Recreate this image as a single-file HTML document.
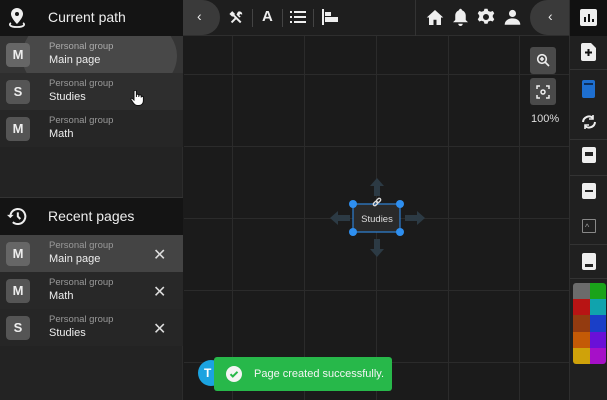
<!DOCTYPE html>
<html><head><style>
*{margin:0;padding:0;box-sizing:border-box}
body{width:607px;height:400px;overflow:hidden;background:#1b1b1b;font-family:"Liberation Sans",sans-serif;position:relative;color:#eee}
.abs{position:absolute}
.left{left:0;top:0;width:183px;height:400px;background:#232323;border-right:1px solid #2c2c2c}
.hdr{position:absolute;left:0;width:183px;height:36px;background:#141414;font-size:14px;color:#eee}
.hdr span{position:absolute;left:48px;top:9px}
.row{position:absolute;left:0;width:183px;height:37px}
.av{position:absolute;left:6px;top:7px;width:24px;height:24px;border-radius:4px;background:#555;color:#eee;font-weight:bold;font-size:13px;text-align:center;line-height:24px}
.g{position:absolute;left:49px;top:5px;font-size:9.5px;color:#999}
.n{position:absolute;left:49px;top:18px;font-size:11px;color:#eee}
.x{position:absolute;left:153px;top:10px;font-size:16px;color:#ddd}
.vl{position:absolute;top:36px;width:1px;height:364px;background:#2b2b2b}
.hl{position:absolute;left:184px;width:385px;height:1px;background:#2b2b2b}
.rp{left:569px;top:0;width:38px;height:400px;background:#202020;border-left:1px solid #2e2e2e}
.sep{position:absolute;left:0;width:38px;height:1px;background:#333}
</style></head><body>
<div class="vl" style="left:232px"></div><div class="vl" style="left:304px"></div><div class="vl" style="left:376px"></div><div class="vl" style="left:448px"></div><div class="vl" style="left:519px"></div>
<div class="hl" style="top:74px"></div><div class="hl" style="top:146px"></div><div class="hl" style="top:218px"></div><div class="hl" style="top:290px"></div><div class="hl" style="top:362px"></div>

<div class="abs" style="left:183px;top:0;width:386px;height:36px;background:#1e1e1e;border-bottom:1px solid #2e2e2e"></div>
<div class="abs" style="left:415px;top:0;width:1px;height:36px;background:#333"></div>
<div class="abs" style="left:170px;top:0;width:50px;height:35px;border-radius:0 18px 18px 0;background:#3a3a3a"></div>
<div class="abs" style="left:197px;top:8px;font-size:14px;color:#eee">&#8249;</div>
<div class="abs" style="left:530px;top:0;width:40px;height:35px;border-radius:18px 0 0 18px;background:#3a3a3a"></div>
<div class="abs" style="left:548px;top:8px;font-size:14px;color:#eee">&#8249;</div>
<svg class="abs" style="left:228px;top:9px" width="17" height="17" viewBox="0 0 24 24" fill="#eee"><path d="M3 6l3-3 4 4-1 1 10 10-2 2L7 10 6 11 2 7zM14 4a4 4 0 0 1 6 4l-3-1-1 2 2 2-2 1-4-4z"/><path d="M4 18l6-6 2 2-6 6z"/></svg>
<div class="abs" style="left:252px;top:9px;width:1px;height:18px;background:#444"></div>
<div class="abs" style="left:262px;top:8px;font-size:15px;font-weight:bold;color:#eee">A</div>
<div class="abs" style="left:282px;top:9px;width:1px;height:18px;background:#444"></div>
<svg class="abs" style="left:290px;top:10px" width="16" height="14" viewBox="0 0 16 14" fill="#eee"><rect x="0" y="1" width="2" height="2"/><rect x="4" y="1" width="12" height="2"/><rect x="0" y="6" width="2" height="2"/><rect x="4" y="6" width="12" height="2"/><rect x="0" y="11" width="2" height="2"/><rect x="4" y="11" width="12" height="2"/></svg>
<div class="abs" style="left:313px;top:9px;width:1px;height:18px;background:#444"></div>
<svg class="abs" style="left:322px;top:9px" width="16" height="16" viewBox="0 0 16 16" fill="#eee"><rect x="0" y="0" width="2" height="16"/><rect x="3" y="3" width="6" height="4"/><rect x="3" y="8" width="13" height="5"/></svg>
<svg class="abs" style="left:426px;top:9px" width="18" height="17" viewBox="0 0 24 22" fill="#eee"><path d="M12 1L1 11h3v10h6v-7h4v7h6V11h3z"/></svg>
<svg class="abs" style="left:453px;top:8px" width="15" height="18" viewBox="0 0 20 24" fill="#eee"><path d="M10 1c1 0 2 1 2 2 3 1 5 4 5 7v6l3 3H0l3-3v-6c0-3 2-6 5-7 0-1 1-2 2-2zM7 21h6a3 3 0 0 1-6 0z"/></svg>
<svg class="abs" style="left:477px;top:8px" width="18" height="18" viewBox="0 0 24 24" fill="#eee"><path d="M10 1h4l1 3 3 1 3-1 2 3-2 3v2l2 3-2 3-3-1-3 1-1 3h-4l-1-3-3-1-3 1-2-3 2-3v-2L1 7l2-3 3 1 3-1zM12 8a4 4 0 1 0 0 8 4 4 0 0 0 0-8z"/></svg>
<svg class="abs" style="left:504px;top:9px" width="17" height="16" viewBox="0 0 24 22" fill="#eee"><circle cx="12" cy="6" r="5"/><path d="M1 22c0-6 5-9 11-9s11 3 11 9z"/></svg>

<div class="abs" style="left:530px;top:47px;width:26px;height:27px;border-radius:3px;background:#4a4a4a"></div>
<svg class="abs" style="left:536px;top:53px" width="14" height="14" viewBox="0 0 14 14" fill="none" stroke="#eee" stroke-width="1.6"><circle cx="6" cy="6" r="4.3"/><path d="M9 9l4 4M4 6h4M6 4v4"/></svg>
<div class="abs" style="left:530px;top:78px;width:26px;height:27px;border-radius:3px;background:#4a4a4a"></div>
<svg class="abs" style="left:536px;top:85px" width="14" height="14" viewBox="0 0 14 14" fill="none" stroke="#eee" stroke-width="1.5"><path d="M1 4V1h3M10 1h3v3M13 10v3h-3M4 13H1v-3"/><circle cx="7" cy="7" r="2"/></svg>
<div class="abs" style="left:531px;top:113px;font-size:11px;color:#ddd">100%</div>

<svg class="abs" style="left:325px;top:175px" width="105" height="85" viewBox="0 0 105 85">
<g fill="#2c3a44"><path d="M52 3l-7 8h4v10h6V11h4z"/><path d="M52 82l-7-8h4V64h6v10h4z"/><path d="M5 43l8-7v4h12v6H13v4z"/><path d="M100 43l-8-7v4H80v6h12v4z"/></g>
<rect x="28" y="29" width="47" height="28" rx="2" fill="#2a2a2a" stroke="#2f7fd0" stroke-width="1.2"/>
<circle cx="28" cy="29" r="4" fill="#2e8ff0"/><circle cx="75" cy="29" r="4" fill="#2e8ff0"/><circle cx="28" cy="57" r="4" fill="#2e8ff0"/><circle cx="75" cy="57" r="4" fill="#2e8ff0"/>
<text x="52" y="47" font-family="Liberation Sans" font-size="9.5" fill="#ddd" text-anchor="middle">Studies</text>
<g stroke="#ddd" stroke-width="1.3" fill="none"><rect x="48" y="27" width="5" height="3" rx="1.5" transform="rotate(-45 50.5 28.5)"/><rect x="51" y="24" width="5" height="3" rx="1.5" transform="rotate(-45 53.5 25.5)"/></g>
</svg>

<div class="abs" style="left:198px;top:360px;width:26px;height:26px;border-radius:50%;background:#1ba3e0;color:#fff;font-size:12px;font-weight:bold;line-height:26px;padding-left:6px">T</div>
<div class="abs" style="left:214px;top:357px;width:178px;height:34px;border-radius:3px;background:#27b84a"></div>
<svg class="abs" style="left:226px;top:366px" width="16" height="16" viewBox="0 0 16 16"><circle cx="8" cy="8" r="8" fill="#f4f4f4"/><path d="M4.5 8.2l2.3 2.3 4.7-4.7" stroke="#27b84a" stroke-width="2" fill="none"/></svg>
<div class="abs" style="left:254px;top:368px;font-size:11px;color:#f4f4f4">Page created successfully.</div>

<div class="abs left">
<div class="hdr" style="top:0"><svg style="position:absolute;left:9px;top:7px" width="16" height="22" viewBox="0 0 16 22" fill="#eee"><path d="M8 1a6 6 0 0 1 6 6c0 4-6 10-6 10S2 11 2 7a6 6 0 0 1 6-6zm0 4a2 2 0 1 0 0 4 2 2 0 0 0 0-4z"/><path d="M2 16c-2 1-2 4 6 4s8-3 6-4" stroke="#eee" stroke-width="1.8" fill="none"/></svg><span>Current path</span></div>
<div class="row" style="top:36px;background:#2a2a2a;overflow:hidden"><div style="position:absolute;left:22px;top:-30px;width:155px;height:100px;border-radius:50%;background:#4a4a4a"></div><div style="position:absolute;left:0;top:0;width:100%;height:100%;background:rgba(70,70,70,.4)"></div><div class="av" style="background:#666">M</div><div class="g" style="color:#aaa">Personal group</div><div class="n">Main page</div></div>
<div class="row" style="top:73px;background:#2e2e2e"><div class="av">S</div><div class="g">Personal group</div><div class="n">Studies</div>
<svg style="position:absolute;left:130px;top:17px" width="14" height="16" viewBox="0 0 14 16"><path d="M4 1.5a1.2 1.2 0 0 1 2.4 0V7l0-1.5a1.2 1.2 0 0 1 2.4 0V7l0-1a1.2 1.2 0 0 1 2.4 0V7.5a1.1 1.1 0 0 1 2.2 0V11c0 2.5-2 4.5-4.5 4.5H7.5C5.5 15.5 4 14 3 12.5L1 9.5C.5 8.7 1.7 7.8 2.4 8.5L4 10z" fill="#fff" stroke="#111" stroke-width="1"/></svg></div>
<div class="row" style="top:110px;background:#262626"><div class="av">M</div><div class="g">Personal group</div><div class="n">Math</div></div>
<div class="abs" style="left:0;top:197px;width:183px;height:1px;background:#333"></div>
<div class="hdr" style="top:198px;height:37px"><svg style="position:absolute;left:7px;top:9px" width="20" height="19" viewBox="0 0 24 22" fill="none" stroke="#eee" stroke-width="2.4"><path d="M4 11a9 9 0 1 1 3 6.7"/><path d="M13 6v5l3 3"/><path d="M0 9l4 4 4-4" fill="#eee" stroke="none"/></svg><span style="top:10px">Recent pages</span></div>
<div class="row" style="top:235px;background:#444"><div class="av" style="background:#666">M</div><div class="g">Personal group</div><div class="n">Main page</div><div class="x">✕</div></div>
<div class="row" style="top:272px;background:#282828"><div class="av">M</div><div class="g">Personal group</div><div class="n">Math</div><div class="x">✕</div></div>
<div class="row" style="top:309px;background:#262626"><div class="av">S</div><div class="g">Personal group</div><div class="n">Studies</div><div class="x">✕</div></div>
</div>

<div class="abs rp">
<div style="position:absolute;left:0;top:0;width:38px;height:36px;background:#111"></div>
<svg style="position:absolute;left:10px;top:9px" width="17" height="17" viewBox="0 0 17 17"><rect width="17" height="17" rx="2" fill="#eee"/><rect x="4" y="8" width="2" height="5" fill="#111"/><rect x="8" y="5" width="2" height="8" fill="#111"/><rect x="12" y="10" width="2" height="3" fill="#111"/></svg>
<svg style="position:absolute;left:11px;top:43px" width="15" height="18" viewBox="0 0 15 18"><path d="M0 2a2 2 0 0 1 2-2h8l5 5v11a2 2 0 0 1-2 2H2a2 2 0 0 1-2-2z" fill="#eee"/><path d="M7.5 6v7M4 9.5h7" stroke="#111" stroke-width="2"/></svg>
<div class="sep" style="top:69px"></div>
<div style="position:absolute;left:12px;top:80px;width:13px;height:18px;border-radius:2px;background:#1e6fd0"></div><div style="position:absolute;left:14px;top:83px;width:9px;height:2px;background:#0c2e5a"></div>
<svg style="position:absolute;left:11px;top:114px" width="16" height="16" viewBox="0 0 16 16" fill="none" stroke="#eee" stroke-width="2"><path d="M2 8a6 6 0 0 1 10-4M14 8a6 6 0 0 1-10 4"/><path d="M12 1v4H8M4 15v-4h4" stroke-width="1.6"/></svg>
<div class="sep" style="top:139px"></div>
<div style="position:absolute;left:12px;top:147px;width:14px;height:16px;border-radius:2px;background:#eee"></div><div style="position:absolute;left:15px;top:152px;width:8px;height:4px;background:#222"></div>
<div class="sep" style="top:175px"></div>
<div style="position:absolute;left:12px;top:183px;width:14px;height:16px;border-radius:2px;background:#eee"></div><div style="position:absolute;left:15px;top:190px;width:8px;height:2px;background:#222"></div>
<div style="position:absolute;left:12px;top:219px;width:14px;height:14px;border:1.5px solid #888;border-radius:1px"></div><div style="position:absolute;left:15px;top:222px;font-size:9px;color:#999">^</div>
<div class="sep" style="top:244px"></div>
<div style="position:absolute;left:12px;top:253px;width:14px;height:17px;border-radius:2px;background:#eee"></div><div style="position:absolute;left:15px;top:264px;width:8px;height:3px;background:#222"></div>
<div class="sep" style="top:278px"></div>
<div style="position:absolute;left:3px;top:283px;width:33px;height:81px;border-radius:3px;overflow:hidden;display:grid;grid-template-columns:1fr 1fr;grid-template-rows:repeat(5,1fr)">
<div style="background:#6b6b6b"></div><div style="background:#1aa31a"></div>
<div style="background:#b81414"></div><div style="background:#10a3ad"></div>
<div style="background:#933b10"></div><div style="background:#1a3fc8"></div>
<div style="background:#c45a06"></div><div style="background:#6a10d8"></div>
<div style="background:#cfa20a"></div><div style="background:#a610c8"></div>
</div>
</div>
</body></html>
